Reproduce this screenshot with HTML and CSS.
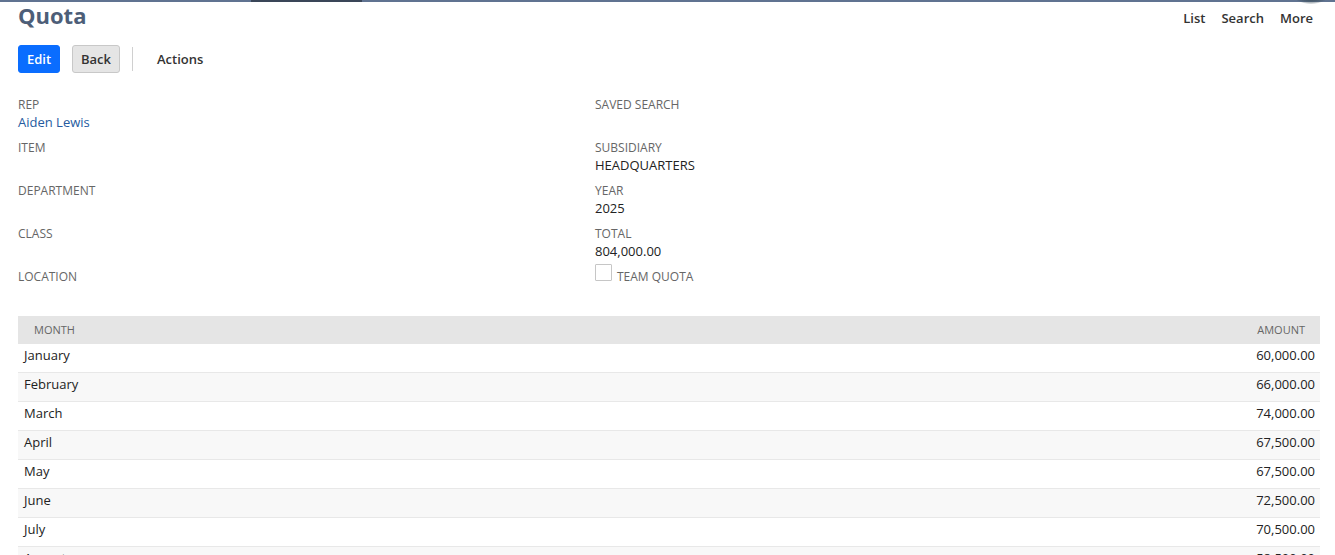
FILE: index.html
```html
<!DOCTYPE html>
<html>
<head>
<meta charset="utf-8">
<link rel="stylesheet" href="styles.css">
</head>
<body>
<div class="topbar"><div class="topbar-seg"></div></div>
<div class="blob"></div>
<div class="page">
  <div class="header">
    <h1 class="title">Quota</h1>
    <nav class="nav">
      <a>List</a>
      <a>Search</a>
      <a>More</a>
    </nav>
  </div>
  <div class="toolbar">
    <button class="btn btn-primary">Edit</button>
    <button class="btn btn-secondary">Back</button>
    <span class="sep"></span>
    <span class="actions">Actions</span>
  </div>
  <div class="fields">
    <div class="col">
      <div class="field"><div class="label">REP</div><div class="value link">Aiden Lewis</div></div>
      <div class="field"><div class="label">ITEM</div><div class="value"></div></div>
      <div class="field"><div class="label">DEPARTMENT</div><div class="value"></div></div>
      <div class="field"><div class="label">CLASS</div><div class="value"></div></div>
      <div class="field"><div class="label">LOCATION</div><div class="value"></div></div>
    </div>
    <div class="col">
      <div class="field"><div class="label">SAVED SEARCH</div><div class="value"></div></div>
      <div class="field"><div class="label">SUBSIDIARY</div><div class="value">HEADQUARTERS</div></div>
      <div class="field"><div class="label">YEAR</div><div class="value">2025</div></div>
      <div class="field"><div class="label">TOTAL</div><div class="value">804,000.00</div></div>
      <div class="field check-field"><span class="checkbox"></span><span class="label">TEAM QUOTA</span></div>
    </div>
  </div>
  <table class="grid">
    <thead>
      <tr><th class="c-month">MONTH</th><th class="c-amount">AMOUNT</th></tr>
    </thead>
    <tbody>
      <tr><td class="c-month">January</td><td class="c-amount">60,000.00</td></tr>
      <tr><td class="c-month">February</td><td class="c-amount">66,000.00</td></tr>
      <tr><td class="c-month">March</td><td class="c-amount">74,000.00</td></tr>
      <tr><td class="c-month">April</td><td class="c-amount">67,500.00</td></tr>
      <tr><td class="c-month">May</td><td class="c-amount">67,500.00</td></tr>
      <tr><td class="c-month">June</td><td class="c-amount">72,500.00</td></tr>
      <tr><td class="c-month">July</td><td class="c-amount">70,500.00</td></tr>
      <tr><td class="c-month">August</td><td class="c-amount">58,500.00</td></tr>
    </tbody>
  </table>
</div>
</body>
</html>
```
FILE: styles.css
```css
html, body {
  margin: 0;
  padding: 0;
  background: #fff;
  font-family: "Open Sans", "Liberation Sans", sans-serif;
  color: #333;
  overflow: hidden;
}
.topbar {
  height: 2px;
  background: #607391;
  display: flex;
}
.topbar-seg {
  margin-left: 251px;
  width: 111px;
  background: #3a4658;
}
.blob {
  position: absolute;
  top: -22px;
  right: 4px;
  width: 40px;
  height: 26px;
  border-radius: 50%;
  background: radial-gradient(ellipse at center, #2f4150 0%, #3f5260 45%, rgba(90,110,130,0) 75%);
}
.page {
  padding: 0 15px 0 18px;
}
.header {
  display: flex;
  justify-content: space-between;
  align-items: flex-start;
  height: 30px;
}
.title {
  margin: 0;
  font-size: 22px;
  font-weight: 700;
  color: #4d5e78;
  line-height: 26px;
}
.nav {
  display: flex;
  gap: 16px;
  margin-top: 7px;
  padding-right: 7px;
  line-height: 18px;
}
.nav a {
  font-size: 13px;
  font-weight: 600;
  color: #333;
}
.toolbar {
  display: flex;
  align-items: center;
  margin-top: 13px;
  height: 28px;
}
.btn {
  font-family: "Open Sans", "Liberation Sans", sans-serif;
  font-size: 13px;
  font-weight: 600;
  height: 28px;
  border-radius: 3px;
  cursor: pointer;
  padding: 0;
}
.btn-primary {
  background: #0a6dff;
  color: #fff;
  border: 1px solid #0a6dff;
  width: 42px;
}
.btn-secondary {
  margin-left: 12px;
  background: #e5e5e5;
  color: #333;
  border: 1px solid #c8c8c8;
  width: 48px;
}
.sep {
  width: 1px;
  height: 24px;
  background: #d0d0d0;
  margin-left: 12px;
}
.actions {
  margin-left: 24px;
  font-size: 13px;
  font-weight: 600;
  color: #333;
}
.fields {
  display: grid;
  grid-template-columns: 577px 1fr;
  margin-top: 24px;
}
.field {
  height: 43px;
  display: flex;
  flex-direction: column;
}
.label {
  font-size: 12px;
  line-height: 16px;
  color: #666;
  text-transform: uppercase;
}
.value {
  font-size: 13px;
  line-height: 18px;
  min-height: 18px;
  color: #222;
}
.value.link {
  color: #255ba0;
}
.check-field {
  flex-direction: row;
  align-items: flex-start;
}
.check-field .label {
  margin-left: 5px;
}
.checkbox {
  width: 15px;
  height: 15px;
  border: 1px solid #c6c6c6;
  border-radius: 1px;
  margin-top: -5px;
  background: #fff;
}
.grid {
  width: 1302px;
  border-collapse: separate;
  border-spacing: 0;
  margin-top: 4px;
}
.grid thead tr {
  background: #e5e5e5;
}
.grid th {
  height: 28px;
  box-sizing: border-box;
  font-size: 11px;
  font-weight: 400;
  color: #666;
  padding: 0 16px 2px;
  text-align: left;
}
.grid th.c-amount {
  text-align: right;
  padding-right: 15px;
}
.grid td {
  height: 29px;
  box-sizing: border-box;
  font-size: 13px;
  line-height: 18px;
  color: #222;
  padding: 2px 6px 0;
  vertical-align: top;
  border-bottom: 1px solid #e8e8e8;
}
.grid tbody tr:nth-child(even) {
  background: #f8f8f8;
}
.grid td.c-amount {
  text-align: right;
  padding-right: 5px;
}
```
